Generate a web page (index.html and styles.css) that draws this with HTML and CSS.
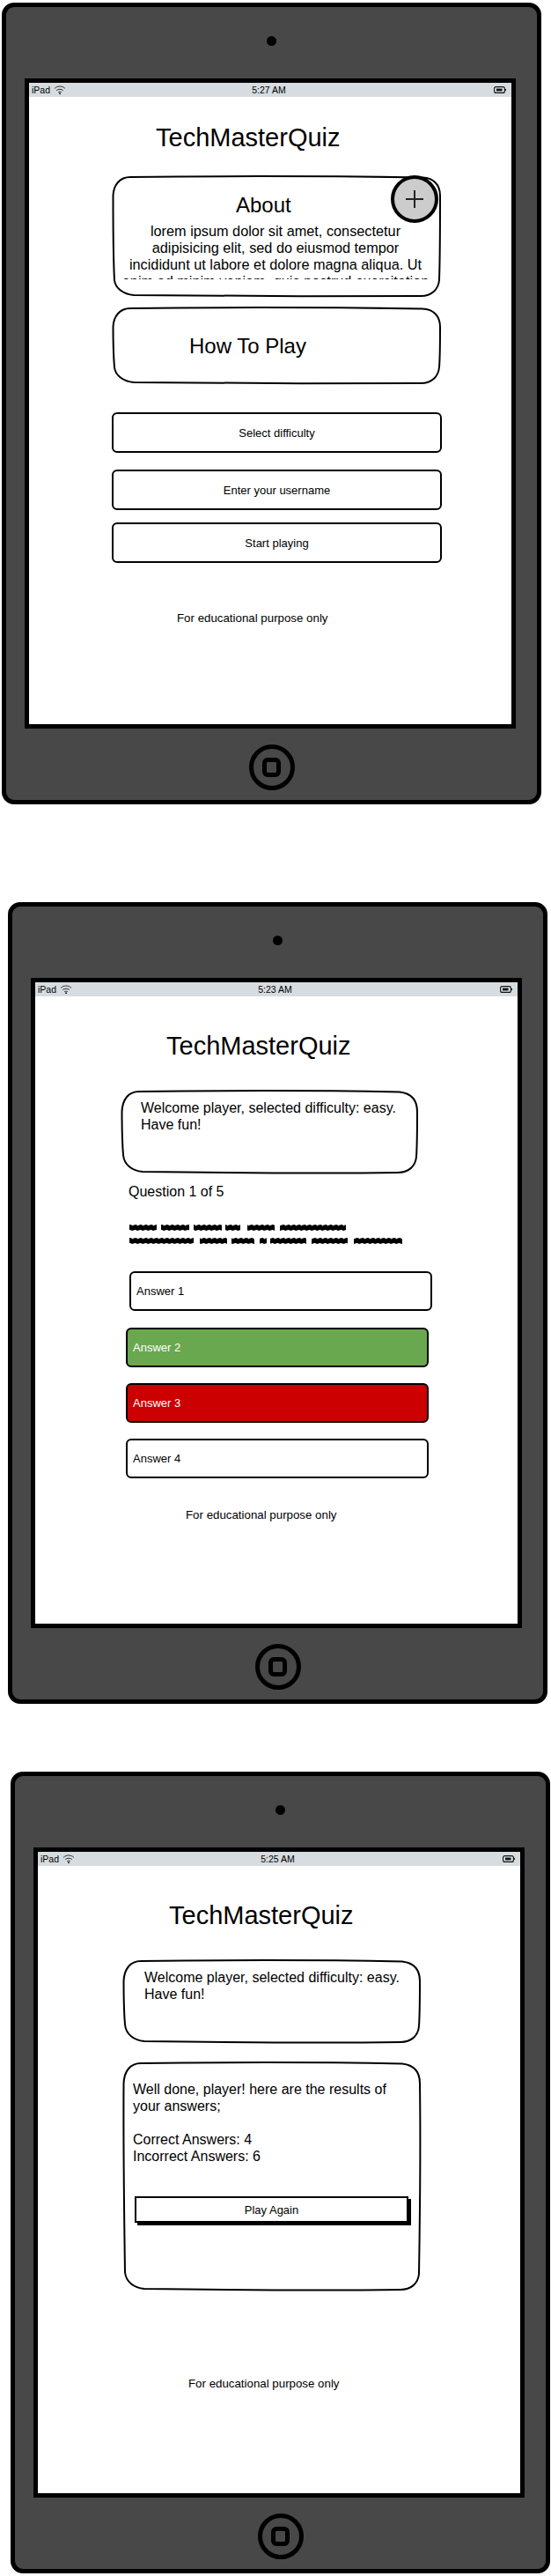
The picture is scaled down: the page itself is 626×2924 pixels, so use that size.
FILE: index.html
```html
<!DOCTYPE html>
<html lang="en">
<head>
  <meta charset="UTF-8" />
  <meta name="viewport" content="width=device-width, initial-scale=1.0" />
  <title>TechMasterQuiz wireframes</title>
  <link rel="stylesheet" href="styles.css">
</head>
<body>
  <!-- home -->
  <section class="device device-home">
    <div class="camera"></div>
    <div class="screen">
      <div class="status">
        <div class="status-left">iPad
          <svg class="wifi" viewBox="0 0 14 10"><path d="M1 3.4C4.6 0.2 9.4 0.2 13 3.4M3.2 5.6C5.4 3.8 8.6 3.8 10.8 5.6M5.2 7.6C6.3 6.9 7.7 6.9 8.8 7.6" /><circle cx="7" cy="9.2" r="0.9" /></svg>
        </div>
        <div class="status-time">5:27 AM</div>
        <svg class="battery" viewBox="0 0 14 8"><rect x="0.6" y="0.6" width="11.8" height="6.8" rx="2" /><rect class="battery-fill" x="3" y="2.6" width="6.5" height="2.8" /><path d="M13.4 3V5" /></svg>
      </div>
      <h1 class="title title-home">TechMasterQuiz</h1>

      <div class="card card-about">
        <svg class="sketch" width="373" height="137"><path d="M20 1C100 0 250 0 352 1.5C365 2 372 10 372 22C372 60 372 90 371 118C370 128 363 136 350 136C250 136.5 100 136 24 135C12 134 3 127 2 118C0.5 90 0.5 50 0.5 22C1 10 8 1 20 1Z" /></svg>
        <h2 class="card-heading about-heading">About</h2>
        <p class="about-body">lorem ipsum dolor sit amet, consectetur<br>adipisicing elit, sed do eiusmod tempor<br>incididunt ut labore et dolore magna aliqua. Ut<br>enim ad minim veniam, quis nostrud exercitation</p>
        <div class="plus">
          <svg width="20" height="20" viewBox="0 0 20 20"><path d="M10 0V20M0 10H20" /></svg>
        </div>
      </div>

      <div class="card card-how">
        <svg class="sketch" width="373" height="87"><path d="M20 1C100 0 250 0 352 1.5C365 2 372 10 372 22C372 40 372 55 371 68C370 78 363 86 350 86C250 86.5 100 86 24 85C12 84 3 77 2 68C0.5 50 0.5 40 0.5 22C1 10 8 1 20 1Z" /></svg>
        <h2 class="card-heading how-heading">How To Play</h2>
      </div>

      <button class="btn btn-difficulty">Select difficulty</button>
      <button class="btn btn-username">Enter your username</button>
      <button class="btn btn-start">Start playing</button>

      <p class="footnote footnote-home">For educational purpose only</p>
    </div>
    <div class="home-btn"><div class="home-square"></div></div>
  </section>

  <!-- question -->
  <section class="device device-quiz">
    <div class="camera"></div>
    <div class="screen">
      <div class="status">
        <div class="status-left">iPad
          <svg class="wifi" viewBox="0 0 14 10"><path d="M1 3.4C4.6 0.2 9.4 0.2 13 3.4M3.2 5.6C5.4 3.8 8.6 3.8 10.8 5.6M5.2 7.6C6.3 6.9 7.7 6.9 8.8 7.6" /><circle cx="7" cy="9.2" r="0.9" /></svg>
        </div>
        <div class="status-time">5:23 AM</div>
        <svg class="battery" viewBox="0 0 14 8"><rect x="0.6" y="0.6" width="11.8" height="6.8" rx="2" /><rect class="battery-fill" x="3" y="2.6" width="6.5" height="2.8" /><path d="M13.4 3V5" /></svg>
      </div>
      <h1 class="title">TechMasterQuiz</h1>

      <div class="card welcome welcome-quiz">
        <svg class="sketch" width="337" height="94"><path d="M20 1C100 0 240 0 316 1.5C329 3 336 11 336 24C336 45 336 60 335 75C334 86 326 93 314 93C240 94 100 93 24 92C12 91 3 84 2 73C0.5 55 0.5 40 0.5 24C1 10 8 1 20 1Z" /></svg>
        Welcome player, selected difficulty: easy.<br>Have fun!
      </div>

      <p class="question">Question 1 of 5</p>

      <svg class="scribble" width="320" height="22">
        <defs>
          <pattern id="scribble-wave" width="6" height="7" patternUnits="userSpaceOnUse">
            <path d="M-1 5.5Q1.5 0.5 3 3.5T7 1.5" />
          </pattern>
        </defs>
        <g class="scribble-line">
          <rect x="1" width="31" height="7" /><rect x="37" width="32" height="7" /><rect x="74" width="32" height="7" /><rect x="110" width="17" height="7" /><rect x="135" width="31" height="7" /><rect x="172" width="75" height="7" />
        </g>
        <g class="scribble-line" transform="translate(0 15)">
          <rect x="1" width="73" height="7" /><rect x="81" width="31" height="7" /><rect x="117" width="26" height="7" /><rect x="149" width="8" height="7" /><rect x="161" width="41" height="7" /><rect x="208" width="41" height="7" /><rect x="256" width="55" height="7" />
        </g>
      </svg>

      <button class="btn answer answer-first">Answer 1</button>
      <button class="btn answer answer-right">Answer 2</button>
      <button class="btn answer answer-wrong">Answer 3</button>
      <button class="btn answer">Answer 4</button>

      <p class="footnote footnote-quiz">For educational purpose only</p>
    </div>
    <div class="home-btn"><div class="home-square"></div></div>
  </section>

  <!-- results -->
  <section class="device device-results">
    <div class="camera"></div>
    <div class="screen">
      <div class="status">
        <div class="status-left">iPad
          <svg class="wifi" viewBox="0 0 14 10"><path d="M1 3.4C4.6 0.2 9.4 0.2 13 3.4M3.2 5.6C5.4 3.8 8.6 3.8 10.8 5.6M5.2 7.6C6.3 6.9 7.7 6.9 8.8 7.6" /><circle cx="7" cy="9.2" r="0.9" /></svg>
        </div>
        <div class="status-time">5:25 AM</div>
        <svg class="battery" viewBox="0 0 14 8"><rect x="0.6" y="0.6" width="11.8" height="6.8" rx="2" /><rect class="battery-fill" x="3" y="2.6" width="6.5" height="2.8" /><path d="M13.4 3V5" /></svg>
      </div>
      <h1 class="title">TechMasterQuiz</h1>

      <div class="card welcome welcome-results">
        <svg class="sketch" width="338" height="94"><path d="M20 1C100 0 240 0 317 1.5C330 3 337 11 337 24C337 45 337 60 336 75C335 86 327 93 315 93C240 94 100 93 24 92C12 91 3 84 2 73C0.5 55 0.5 40 0.5 24C1 10 8 1 20 1Z" /></svg>
        Welcome player, selected difficulty: easy.<br>Have fun!
      </div>

      <div class="card results">
        <svg class="sketch" width="338" height="259"><path d="M20 1C100 0 240 0 317 1.5C330 3 337 11 337 24C338 100 337 180 336 240C335 251 327 258 315 258C240 259 100 258 24 257C12 256 3 249 2 238C1 170 0 100 0.5 24C1 10 8 1 20 1Z" /></svg>
        Well done, player! here are the results of<br>your answers;<br><br>Correct Answers: 4<br>Incorrect Answers: 6
        <button class="btn play-again">Play Again</button>
      </div>

      <p class="footnote footnote-results">For educational purpose only</p>
    </div>
    <div class="home-btn"><div class="home-square"></div></div>
  </section>
</body>
</html>
```

FILE: styles.css
```css
* {
  box-sizing: border-box;
}

body {
  margin: 0;
  background: white;
  color: #000;
  font-family: 'Liberation Sans', Arial, sans-serif;
}

.device {
  display: flex;
  flex-direction: column;
  align-items: center;
  width: 613px;
  height: 910px;
  background: #484848;
  border: 5px solid #000;
  border-radius: 14px;
}

.device-home {
  margin: 3px 0 0 2px;
}

.device-quiz {
  margin: 111px 0 0 9px;
}

.device-results {
  margin: 77px 0 0 12px;
}

.camera {
  width: 11px;
  height: 11px;
  margin-top: 33px;
  background: #000;
  border-radius: 50%;
}

.screen {
  align-self: flex-start;
  display: flex;
  flex-direction: column;
  align-items: flex-start;
  width: 558px;
  height: 738px;
  margin: 37px 0 0 21px;
  background: white;
  border: 5px solid #000;
}

.home-btn {
  display: flex;
  align-items: center;
  justify-content: center;
  width: 52px;
  height: 52px;
  margin-top: 18px;
  border: 5px solid #000;
  border-radius: 50%;
}

.home-square {
  width: 21px;
  height: 22px;
  border: 5px solid #000;
  border-radius: 6px;
}

/* status bar */
.status {
  display: grid;
  grid-template-columns: 1fr auto 1fr;
  align-items: center;
  width: 100%;
  height: 16px;
  padding: 0 6px 0 3px;
  background: #d6dcdf;
  font-size: 10.5px;
}

.status-left {
  display: flex;
  align-items: center;
  gap: 4px;
}

.wifi {
  width: 14px;
  height: 10px;
}

.wifi path {
  fill: none;
  stroke: #333;
  stroke-width: 1;
}

.battery {
  justify-self: end;
  width: 14px;
  height: 8px;
}

.battery rect,
.battery path {
  fill: none;
  stroke: #111;
  stroke-width: 1.1;
}

.battery .battery-fill {
  fill: #111;
  stroke: none;
}

.title {
  margin: 39px 0 0 149px;
  font-size: 29px;
  font-weight: 400;
  line-height: 34px;
}

.title-home {
  margin: 29px 0 0 144px;
}

/* sketched cards */
.card {
  position: relative;
  flex: none;
}

.sketch {
  position: absolute;
  top: 0;
  left: 0;
  overflow: visible;
}

.sketch path {
  fill: none;
  stroke: #000;
  stroke-width: 2;
}

.card-about {
  width: 373px;
  height: 137px;
  margin: 27px 0 0 95px;
  padding-top: 18px;
}

.card-heading {
  margin: 0;
  font-size: 24px;
  font-weight: 400;
  line-height: 30px;
}

.about-heading {
  margin-left: 140px;
}

.about-body {
  width: 352px;
  height: 64px;
  margin: 5px 0 0 9px;
  overflow: hidden;
  font-size: 16.3px;
  line-height: 19px;
  white-space: nowrap;
  text-align: center;
}

.plus {
  position: absolute;
  top: -1px;
  left: 316px;
  display: flex;
  align-items: center;
  justify-content: center;
  width: 54px;
  height: 54px;
  background: #ccc;
  border: 4px solid #000;
  border-radius: 50%;
}

.plus path {
  fill: none;
  stroke: #222;
  stroke-width: 2;
}

.card-how {
  display: flex;
  align-items: center;
  width: 373px;
  height: 87px;
  margin: 12px 0 0 95px;
}

.how-heading {
  margin-left: 87px;
}

.btn {
  display: block;
  flex: none;
  width: 375px;
  height: 46px;
  padding: 0;
  background: white;
  color: #000;
  border: 2px solid #000;
  border-radius: 6px;
  font-family: inherit;
  font-size: 13px;
}

.btn-difficulty {
  margin: 32px 0 0 94px;
}

.btn-username {
  margin: 19px 0 0 94px;
}

.btn-start {
  margin: 14px 0 0 94px;
}

.footnote {
  margin: 0;
  font-size: 13.3px;
  line-height: 16px;
}

.footnote-home {
  margin: 55px 0 0 168px;
}

.footnote-quiz {
  margin: 34px 0 0 171px;
}

.footnote-results {
  margin: 98px 0 0 171px;
}

/* question screen */
.welcome {
  height: 94px;
  padding-top: 10px;
  font-size: 16px;
  line-height: 19px;
}

.welcome-quiz {
  width: 337px;
  margin: 34px 0 0 98px;
  padding-left: 22px;
}

.welcome-results {
  width: 338px;
  margin: 34px 0 0 97px;
  padding-left: 24px;
}

.question {
  margin: 11px 0 0 106px;
  font-size: 16px;
  line-height: 19px;
}

.scribble {
  flex: none;
  margin: 28px 0 0 106px;
}

.scribble-line rect {
  fill: url(#scribble-wave);
}

.scribble path {
  fill: none;
  stroke: #000;
  stroke-width: 4.4;
}

.answer {
  width: 344px;
  height: 45px;
  margin: 18px 0 0 103px;
  padding-left: 6px;
  font-size: 13px;
  text-align: left;
}

.answer-first {
  margin: 31px 0 0 107px;
}

.answer-right {
  margin-top: 19px;
  background: #6aa84f;
  color: white;
}

.answer-wrong {
  background: #cc0000;
  color: white;
}

/* results screen */
.results {
  width: 338px;
  height: 259px;
  margin: 22px 0 0 97px;
  padding: 21px 0 0 11px;
  font-size: 16px;
  line-height: 19px;
}

.play-again {
  width: 311px;
  height: 30px;
  margin: 36px 0 0 2px;
  border-radius: 0;
  box-shadow: 3px 3px 0 #000;
}
```
